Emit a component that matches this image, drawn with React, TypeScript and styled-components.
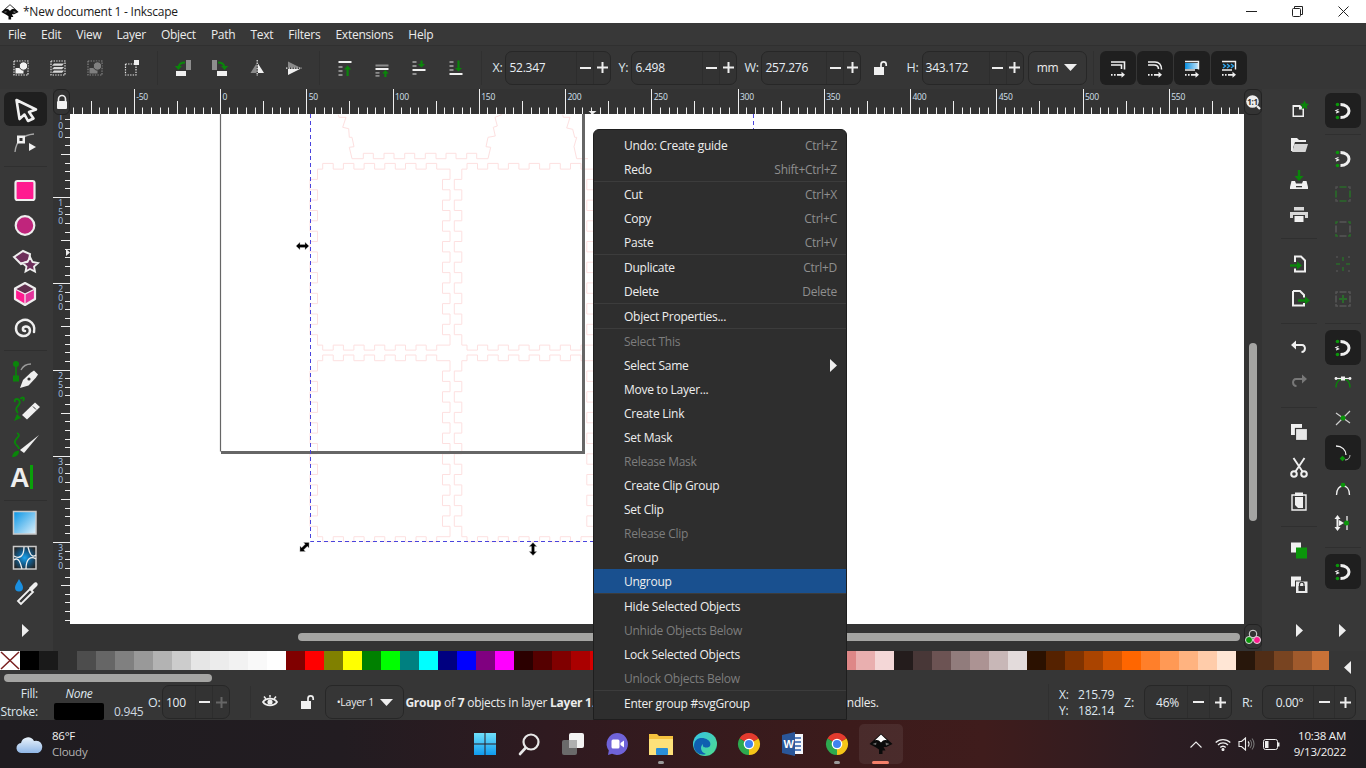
import React from "react";
import styled, { createGlobalStyle } from "styled-components";

const W = "#f0f0f0";
const G = "#0a850a";
const FONT = `"Open Sans", "Noto Sans", "Liberation Sans", sans-serif`;

const Global = createGlobalStyle`
  html, body { margin: 0; padding: 0; background: #363636; overflow: hidden; }
  * { box-sizing: border-box; }
`;

const Root = styled.div`
  position: relative; width: 1366px; height: 768px; overflow: hidden;
  display: flex; flex-direction: column; background: #363636; color: #ececec;
  font-family: ${FONT}; font-size: 12px; letter-spacing: -0.25px;
`;
const TitleBar = styled.div`
  height: 23px; background: #fff; color: #1a1a1a; display: flex; align-items: center; padding-left: 1px;
`;
const TitleText = styled.span` margin-left: 4px; font-size: 12px; flex: 1; `;
const WinBtn = styled.div` width: 46px; height: 23px; display: flex; align-items: center; justify-content: center; `;
const MenuBar = styled.div`
  height: 23px; background: #383838; display: flex; align-items: center; padding-left: 8px; gap: 15px;
  border-bottom: 1px solid #303030;
`;
const MenuLabel = styled.span` color: #ececec; `;
const ControlBar = styled.div`
  height: 43px; background: #363636; display: flex; align-items: center; padding-left: 2px; flex: none;
`;
const CmdSlot = styled.div`
  width: 37.2px; height: 34px; flex: none; display: flex; align-items: center; justify-content: center;
`;
const BarSep = styled.div`
  width: 13.4px; height: 34px; flex: none; display: flex; justify-content: center;
  &::after { content: ""; width: 1px; background: #303030; }
`;
const FieldLabel = styled.span<{ $w: number; $ml?: number }>`
  width: ${(p) => p.$w}px; margin-left: ${(p) => p.$ml ?? 0}px; flex: none; color: #dfe6ee; font-size: 12.5px;
`;
const Field = styled.div<{ $w: number; $ml?: number }>`
  width: ${(p) => p.$w}px; height: 34px; flex: none; margin-left: ${(p) => p.$ml ?? 0}px;
  display: flex; align-items: stretch; border: 1px solid #272727; border-radius: 7px; background: #333;
`;
const FieldValue = styled.div<{ $center?: boolean }>`
  flex: 1; min-width: 0; display: flex; align-items: center; padding-left: 3px; color: #e8eef4; font-size: 12px;
  justify-content: ${(p) => (p.$center ? "center" : "flex-start")};
`;
const Stepper = styled.div<{ $w: number }>`
  width: ${(p) => p.$w}px; flex: none; display: flex; align-items: center; justify-content: center;
  border-left: 1px solid #2d2d2d;
`;
const Dropdown = styled.div<{ $w: number; $ml?: number }>`
  width: ${(p) => p.$w}px; height: 34px; flex: none; margin-left: ${(p) => p.$ml ?? 0}px;
  display: flex; align-items: center; justify-content: center; gap: 6px;
  border: 1px solid #272727; border-radius: 7px; background: #363636; font-size: 12px;
`;
const LayerName = styled.span` font-size: 10.5px; `;
const DarkBtn = styled.div`
  width: 36px; height: 34px; margin-right: 1px; flex: none; background: #1f1f1f; border-radius: 6px;
  display: flex; align-items: center; justify-content: center;
`;
const Work = styled.div` height: 562px; flex: none; display: flex; `;
const Toolbox = styled.div`
  width: 53px; flex: none; display: flex; flex-direction: column; align-items: center; padding: 3px 3px 0 0;
  background: #383838;
`;
const ToolSlot = styled.div<{ $active?: boolean; $h?: number; $w?: number }>`
  width: ${(p) => p.$w ?? 43}px; height: ${(p) => p.$h ?? 34.4}px; flex: none; border-radius: 6px;
  display: flex; align-items: center; justify-content: center;
  background: ${(p) => (p.$active ? "#1f1f1f" : "transparent")};
`;
const ToolSep = styled.div<{ $h?: number; $w?: number }>`
  width: ${(p) => p.$w ?? 43}px; height: ${(p) => p.$h ?? 12}px; flex: none; display: flex; align-items: center;
  &::after { content: ""; flex: 1; height: 1px; background: #2f2f2f; }
`;
const BottomArrow = styled.div`
  margin-top: auto; margin-bottom: 11px; height: 20px; display: flex; align-items: center; justify-content: center;
`;
const CanvasCol = styled.div` flex: 1; min-width: 0; display: flex; flex-direction: column; background: #333; `;
const RulerRow = styled.div` height: 25px; flex: none; display: flex; `;
const CornerBtn = styled.div<{ $w: number }>`
  width: ${(p) => p.$w}px; height: 26px; flex: none; border: 1px solid #222; border-radius: 6px; z-index: 2;
  display: flex; align-items: center; justify-content: center; background: #333;
`;
const HRuler = styled.svg` flex: 1; height: 25px; display: block; min-width: 0; `;
const MidRow = styled.div` height: 510px; flex: none; display: flex; `;
const VRuler = styled.svg` width: 17px; height: 510px; flex: none; display: block; `;
const Drawing = styled.svg` flex: 1; height: 510px; min-width: 0; display: block; background: #fff; `;
const VTrack = styled.div` width: 18px; flex: none; padding: 229px 0 0 5px; background: #333; `;
const VThumb = styled.div` width: 8px; height: 178px; border-radius: 4px; background: #a5a5a3; `;
const HRow = styled.div` height: 27px; flex: none; display: flex; align-items: flex-start; padding-left: 245px; `;
const HThumb = styled.div` flex: 1; height: 8px; margin-top: 9px; border-radius: 4px; background: #a5a5a3; `;
const MixBtn = styled(CornerBtn)` margin-left: 4px; height: 25px; `;
const Commands = styled.div`
  width: 58px; flex: none; display: flex; flex-direction: column; align-items: center; padding: 4px 2px 0 18px;
  background: #383838;
`;
const Snaps = styled.div`
  width: 46px; flex: none; display: flex; flex-direction: column; align-items: center; padding: 4px 1px 0 0;
  background: #383838;
`;
const PaletteRow = styled.div` height: 33px; flex: none; display: flex; background: #363636; `;
const PaletteCol = styled.div` width: 1329px; flex: none; overflow: hidden; `;
const Swatches = styled.div` height: 19px; display: flex; `;
const Swatch = styled.div<{ $c: string }>` width: 19px; flex: none; background: ${(p) => p.$c}; `;
const NoPaint = styled.svg` width: 20px; height: 19px; flex: none; display: block; background: #fff; `;
const PaletteThumb = styled.div` width: 208px; height: 8px; margin: 4px 0 0 4px; border-radius: 4px; background: #a5a5a3; `;
const PaletteArrow = styled.div` flex: 1; display: flex; align-items: flex-start; justify-content: center; padding-top: 10px; `;
const Status = styled.div` height: 36px; flex: none; display: flex; align-items: center; background: #363636; padding-right: 10px; `;
const StyleGrid = styled.div`
  width: 148px; height: 36px; flex: none; display: grid; grid-template-columns: 38px 50px auto; column-gap: 16px;
  grid-template-rows: 19px 17px; align-items: center;
`;
const StyleLabel = styled.span` text-align: right; color: #dfe6ee; `;
const NoneText = styled.span` text-align: center; font-style: italic; color: #dfe6ee; `;
const StrokeBox = styled.div` height: 17px; background: #000; border-radius: 2px; `;
const StrokeValue = styled.span` margin-left: -6px; color: #cfd8e0; `;
const StatusSep = styled.div` width: 1px; height: 32px; margin-left: 20px; flex: none; background: #303030; `;
const Message = styled.div` flex: 1; min-width: 0; margin-left: 1px; white-space: nowrap; overflow: hidden; font-size: 12px; color: #ececec; `;
const Coords = styled.div`
  width: 76px; height: 36px; flex: none; padding: 2px 10px 0 10px; border-left: 1px solid #303030;
  display: grid; grid-template-columns: auto auto; justify-content: space-between; grid-auto-rows: 16px; align-items: center;
  color: #dfe6ee;
`;
const Taskbar = styled.div`
  height: 48px; flex: none; display: flex; align-items: center; position: relative;
  background: linear-gradient(90deg, #1f1c20 0%, #221c21 25%, #2f1a20 40%, #3c1b1b 62%, #3f1c1c 72%, #2c1c22 85%, #1f1c20 100%);
  color: #f2f2f2;
`;
const Weather = styled.div` width: 463px; flex: none; display: flex; align-items: center; padding-left: 16px; gap: 8px; `;
const WeatherText = styled.div` display: flex; flex-direction: column; line-height: 16px; font-size: 11.5px; `;
const Dim = styled.span` color: #b4b2b2; `;
const TaskIcon = styled.div<{ $active?: boolean }>`
  position: relative; width: 44px; height: 40px; flex: none; display: flex; align-items: center; justify-content: center;
  background: ${(p) => (p.$active ? "rgba(255,255,255,0.07)" : "transparent")}; border-radius: 5px;
`;
const TaskDot = styled.span`
  position: absolute; left: 19px; bottom: 0; width: 6px; height: 3px; border-radius: 2px; background: #9a9a9a;
`;
const TaskUnderline = styled.span`
  position: absolute; left: 13px; bottom: 0; width: 17px; height: 3px; border-radius: 2px; background: #f4806a;
`;
const Tray = styled.div` margin-left: auto; display: flex; align-items: center; padding-right: 20px; `;
const TraySlot = styled.div<{ $w: number }>` width: ${(p) => p.$w}px; height: 24px; display: flex; align-items: center; justify-content: center; `;
const Clock = styled.div` margin-left: 7px; text-align: right; line-height: 16px; font-size: 11.5px; `;
const Menu = styled.div`
  position: absolute; left: 593px; top: 129px; width: 254px; height: 591px; padding-top: 3px;
  background: #2e2e2e; border: 1px solid #1e1e1e; border-radius: 6px 6px 0 0; color: #eee; overflow: hidden;
`;
const MenuRow = styled.div<{ $off?: boolean; $on?: boolean }>`
  height: 24px; display: flex; align-items: center; justify-content: space-between; padding: 0 9px 0 30px;
  color: ${(p) => (p.$off ? "#7d7d7d" : "#eee")};
  background: ${(p) => (p.$on ? "#19508f" : "transparent")};
`;
const Shortcut = styled.span` color: #8f8f8f; `;
const MenuSep = styled.div` height: 1px; background: #3c3c3c; `;

type Sv = { s?: number; children: React.ReactNode; vb?: string };
const Ic = ({ s = 24, vb = "0 0 24 24", children }: Sv) => (
  <svg width={s} height={s} viewBox={vb} style={{ overflow: "visible", display: "block" }}>{children}</svg>
);
const dash = { fill: "none", stroke: "#e8e8e8", strokeWidth: 1.2, strokeDasharray: "1.4 1.2" };

const Minus = ({ c = "#eee" }: { c?: string }) => <svg width="11" height="2"><rect width="11" height="2" fill={c} /></svg>;
const Plus = ({ c = "#eee" }: { c?: string }) => (
  <svg width="11" height="11"><rect y="4.5" width="11" height="2" fill={c} /><rect x="4.5" width="2" height="11" fill={c} /></svg>
);
const Tri = ({ d, c = "#eee" }: { d: "down" | "right" | "left"; c?: string }) =>
  d === "down" ? <svg width="13" height="7"><polygon points="0,0 13,0 6.5,7" fill={c} /></svg>
    : d === "right" ? <svg width="7" height="13"><polygon points="0,0 7,6.5 0,13" fill={c} /></svg>
      : <svg width="7" height="13"><polygon points="7,0 0,6.5 7,13" fill={c} /></svg>;

const Unlock = () => (
  <Ic s={16} vb="0 0 16 16"><path d="M9 7V4.5a2.6 2.6 0 0 1 5.2 0V6" fill="none" stroke={W} strokeWidth="1.7" /><rect x="2" y="7" width="10" height="8" fill={W} /></Ic>
);
const Lock = () => (
  <Ic s={16} vb="0 0 16 16"><path d="M4.5 7V5a3.5 3.5 0 0 1 7 0v2" fill="none" stroke={W} strokeWidth="1.6" /><rect x="3" y="7" width="10" height="8" rx="1" fill={W} /></Ic>
);

const InkLogo = ({ s = 18 }: { s?: number }) => (
  <Ic s={s}>
    <path d="M12 1.500 23.500 12 17.500 15 14.500 15 16.500 18.500 13.500 18.500 13.500 22 10 22 10 17.500 7 15.500 .5 12Z" fill="#0a0a0a" />
    <path d="M12 2.500 18 8.300C15.500 7.500 14 8 12 10.500 10 8 8.500 7.500 6 8.300Z" fill="#fff" />
    <path d="M3.500 12 7.500 10.500 7 13ZM20.500 12 16.500 10.500 17 13.500Z" fill="#6e6e6e" />
  </Ic>
);

const SelAll = ({ c = "#f2f2f2", d = "#e8e8e8" }: { c?: string; d?: string }) => (
  <Ic>
    <rect x="5" y="5" width="14" height="14" {...dash} stroke={d} />
    <rect x="6.5" y="12" width="8" height="5.5" fill={c} />
    <circle cx="14.5" cy="10" r="4.2" fill={c} stroke="#363636" strokeWidth="1" />
  </Ic>
);
const cmdIcons: React.ReactNode[] = [
  <SelAll key="a" />,
  <Ic key="b"><rect x="5" y="5" width="14" height="14" {...dash} /><path d="M8 7.5h10l-2 2.2H6ZM8 11h10l-2 2.2H6ZM8 14.5h10l-2 2.2H6Z" fill="#d8d8d8" /></Ic>,
  <SelAll key="c" c="#7f7f7f" d="#858585" />,
  <Ic key="d"><rect x="5.5" y="8" width="10.5" height="11" {...dash} /><rect x="14" y="4" width="5" height="5" fill={W} /></Ic>,
  <Ic key="e"><rect x="15" y="4" width="5" height="10" fill="#8d8d8d" /><rect x="5" y="15" width="10" height="5" fill={W} /><path d="M14 6.5C10 6.5 8 8.5 7.6 11" fill="none" stroke={G} strokeWidth="2" /><polygon points="3.8,10 11,10 7.4,14" fill={G} /></Ic>,
  <Ic key="f"><rect x="4" y="4" width="5" height="10" fill="#8d8d8d" /><rect x="9" y="15" width="10" height="5" fill={W} /><path d="M10 6.5C14 6.5 16 8.5 16.4 11" fill="none" stroke={G} strokeWidth="2" /><polygon points="13,10 20.2,10 16.6,14" fill={G} /></Ic>,
  <Ic key="g"><polygon points="5.5,17 11.5,7.5 11.5,17" fill="#8a8a8a" /><polygon points="13,7.5 19,17 13,17" fill={W} /><line x1="12.2" y1="4" x2="12.2" y2="20" {...dash} /></Ic>,
  <Ic key="h"><polygon points="6,5.5 18,11.5 6,11.5" fill="#8a8a8a" /><polygon points="6,13 18,13 6,19" fill={W} /><line x1="4" y1="12.2" x2="20" y2="12.2" {...dash} /></Ic>,
  <Ic key="i"><rect x="5.5" y="5" width="13" height="2" fill={W} /><path d="M5.5 10h4v2h-4zM5.5 14h4v2h-4zM5.5 18h4v2h-4z" fill="#8d8d8d" /><path d="M14.6 20v-7" stroke={G} strokeWidth="2.2" /><polygon points="11,13.5 18.2,13.5 14.6,9.5" fill={G} /></Ic>,
  <Ic key="j"><rect x="5.5" y="8.5" width="13" height="2" fill="#8d8d8d" /><rect x="5.5" y="12" width="13" height="2" fill={W} /><path d="M5.5 16h4v1.8h-4zM5.5 19h4v1.8h-4z" fill="#8d8d8d" /><path d="M15.4 21v-4" stroke={G} strokeWidth="2.2" /><polygon points="12,17.5 18.8,17.5 15.4,14" fill={G} /></Ic>,
  <Ic key="k"><path d="M5.5 5h4v2h-4zM5.5 9h4v2h-4zM5.5 17h4v2h-4z" fill="#8d8d8d" /><rect x="5.5" y="13" width="13" height="2" fill={W} /><path d="M14.5 4.5v4" stroke={G} strokeWidth="2.2" /><polygon points="11,8 18,8 14.5,11.5" fill={G} /></Ic>,
  <Ic key="l"><path d="M5.5 5h4v2h-4zM5.5 9h4v2h-4zM5.5 13h4v2h-4z" fill="#8d8d8d" /><rect x="5.5" y="17" width="13" height="2" fill={W} /><path d="M14.5 4.5v8" stroke={G} strokeWidth="2.2" /><polygon points="11,12 18,12 14.5,15.5" fill={G} /></Ic>,
];

const TB = ({ top, fill }: { top: React.ReactNode; fill?: React.ReactNode }) => (
  <Ic>
    {fill}
    {top}
    <path d="M5 18.8h1.6M8 18.8h1.6M11 18.8h6" stroke={W} strokeWidth="1.7" fill="none" />
    <polygon points="15.5,15.8 19,18.8 15.5,21.8" fill={W} />
  </Ic>
);
const tfIcons = [
  <TB key="a" top={<path d="M5 6h13.5v7.5M5 9h10.5v4" fill="none" stroke={W} strokeWidth="1.6" />} />,
  <TB key="b" top={<path d="M5 6h7c4 0 6.5 3 6.5 7.5M5 9h6c3 0 4.5 2 4.5 4" fill="none" stroke={W} strokeWidth="1.6" />} />,
  <TB key="c"
    fill={<><defs><linearGradient id="tfg" x1="0" x2="1"><stop offset="0" stopColor="#0a8fe0" /><stop offset="1" stopColor="#bfe3fa" /></linearGradient></defs><rect x="5" y="7" width="13" height="6" fill="url(#tfg)" /></>}
    top={<path d="M5 5.5h13.5v8M5 14h10" fill="none" stroke={W} strokeWidth="1.4" />} />,
  <TB key="d"
    fill={<path d="M6 8l2.5 2L6 12M10 8l2.5 2L10 12M14 8l2.5 2L14 12" fill="none" stroke="#2ea6ee" strokeWidth="1.4" />}
    top={<path d="M5 5.5h13.5v8M5 14h10" fill="none" stroke={W} strokeWidth="1.4" />} />,
];

const toolIcons: Record<string, React.ReactNode> = {
  arrow: <Ic s={32} vb="0 0 32 32"><path d="M7.5 7 27 16.5 20 19 24.5 25.5 19 28 15.5 21.5 10.5 26Z" fill="#262626" stroke={W} strokeWidth="2.6" strokeLinejoin="round" /></Ic>,
  node: <Ic s={32} vb="0 0 32 32"><path d="M6 24C7 13 14 7 25 6" fill="none" stroke="#a8a8a8" strokeWidth="1.3" /><rect x="8" y="7.5" width="8" height="8" fill={W} /><rect x="10.5" y="10" width="3" height="3" fill="#333" /><polygon points="20,15 27,19 20,23" fill={W} /></Ic>,
  rect: <Ic s={32} vb="0 0 32 32"><rect x="6.5" y="7" width="19" height="19" rx="2" fill="#ff1a90" stroke="#eee" strokeWidth="2.2" /></Ic>,
  circle: <Ic s={32} vb="0 0 32 32"><circle cx="16" cy="17.5" r="9.3" fill="#c0257c" stroke="#eee" strokeWidth="2.2" /></Ic>,
  star: <Ic s={32} vb="0 0 32 32"><polygon points="5,14 14,8 21,11 20,18 12,21" fill="#6e2f5b" stroke="#eee" strokeWidth="2" /><polygon points="21,14 23.5,19 29,20 25,23.5 26,28.5 21,26 16.5,28.5 17.500,23.5 13.5,20 18.5,19" fill="#6e2f5b" stroke="#eee" strokeWidth="1.8" /></Ic>,
  box: <Ic s={32} vb="0 0 32 32"><polygon points="16,6 26,12 16,17 6,12" fill="#62304f" /><polygon points="6,12 16,17 16,27 6,22" fill="#ff1a90" /><polygon points="26,12 16,17 16,27 26,22" fill="#e3349c" /><path d="M6 12 16 17 26 12M16 17V27" fill="none" stroke="#eee" strokeWidth="1.200" /><polygon points="16,6 26,11.5 26,22 16,28 6,22 6,11.5" fill="none" stroke="#eee" strokeWidth="2.2" strokeLinejoin="round" /></Ic>,
  spiral: <Ic s={32} vb="0 0 32 32"><path d="M16 19c-2.6 0-3.2-4 .5-4.5 4.5-.5 6 5 2.5 8-4.500 3.500-12 .5-12-6 0-7 8-10.500 13.500-7.500 3.500 2 5.500 6 4.500 11" fill="none" stroke="#eee" strokeWidth="2.5" strokeLinecap="round" /></Ic>,
  pen: <Ic s={32} vb="0 0 32 32"><line x1="7" y1="6" x2="7" y2="20" stroke={G} strokeWidth="1.6" /><circle cx="7" cy="6" r="3" fill={G} /><rect x="4" y="17.500" width="6" height="6" fill={G} /><path d="M12 12C14 8 18 6 22 6" fill="none" stroke="#9a9a9a" strokeWidth="1.3" /><path d="M11 30 14 22 22 14.500 25 12.500 29 16.500 27 19.500 19.500 27.500Z" fill={W} /><circle cx="20" cy="21" r="1.600" fill="#363636" /></Ic>,
  pencil: <Ic s={32} vb="0 0 32 32"><path d="M9 21C3 15 14 13 10 8 8 6 5 7 6 10M11.500 7C14 4 16 6 14 9" fill="none" stroke={G} strokeWidth="1.900" /><polygon points="5,29 8,22 12,26" fill={G} /><polygon points="13,23 26,10.500 31,15 18,27.500" fill={W} /><line x1="24" y1="14.500" x2="27" y2="17.500" stroke="#363636" strokeWidth="1" /></Ic>,
  brush: <Ic s={32} vb="0 0 32 32"><path d="M8 6C14 9 4 12 6 16 7 19 10 19 10 22" fill="none" stroke={G} strokeWidth="1.900" /><path d="M3 30C4 25 7 23 10 24 10 28 7 30 3 30Z" fill={G} /><path d="M11 23 30 8 15 26Z" fill={W} /></Ic>,
  text: <Ic s={32} vb="0 0 32 32"><text x="1" y="26" fontFamily="Liberation Sans, sans-serif" fontWeight="700" fontSize="27" fill="#eee">A</text><rect x="21" y="4" width="3" height="24" fill="#0aa00a" /></Ic>,
  grad: <Ic s={32} vb="0 0 32 32"><defs><linearGradient id="gd" x1="0" y1="0" x2="1" y2="1"><stop offset="0" stopColor="#0795e6" /><stop offset="1" stopColor="#e2f2fb" /></linearGradient></defs><rect x="4.500" y="4.500" width="22.500" height="22.500" fill="url(#gd)" stroke="#c9c9c9" strokeWidth="1.500" /></Ic>,
  mesh: <Ic s={32} vb="0 0 32 32"><defs><radialGradient id="ms" r="0.6"><stop offset="0" stopColor="#1ba4f0" /><stop offset="0.5" stopColor="#125a8a" /><stop offset="1" stopColor="#242424" /></radialGradient></defs><rect x="4.500" y="4.500" width="22.500" height="22.500" fill="url(#ms)" stroke="#c9c9c9" strokeWidth="1.500" /><path d="M5 14C10 17 15 15 15 5M27 17C22 14 17 16 17 27M5 18C10 14 12 23 13 27M27 13C22 17 20 9 19 5" fill="none" stroke="#eee" strokeWidth="1.300" /></Ic>,
  drop: <Ic s={32} vb="0 0 32 32"><path d="M10 3C12 7 14 9 14 11.500A4 4 0 0 1 6 11.500C6 9 8 7 10 3Z" fill="#1a8fe0" /><path d="M11 27 9 25 21 13 24 16 12 28Z" fill="#363636" stroke={W} strokeWidth="1.800" /><path d="M20 12 25 7C27 5 30 8 28 10L23 15Z" fill={W} /></Ic>,
};

const cmdCol: Record<string, React.ReactNode> = {
  new: <Ic><path d="M5.500 7h7.500l4 4v8H5.500Z" fill={W} /><path d="M7 9v8.500h8.500V11.500H12V9Z" fill="#363636" /><polygon points="17.500,2.500 18.900,5.600 22,6 19.700,8.100 20.400,11.300 17.500,9.600 14.600,11.300 15.300,8.100 13,6 16.100,5.600" fill={G} /></Ic>,
  open: <Ic><path d="M4 5h6l2 2h7v2H8l-2 6v3H4Z" fill={W} /><path d="M7.500 11H21l-2.500 8H5Z" fill="#d6d6d6" /></Ic>,
  save: <Ic><path d="M3 20l1.500-6H8l1 2.500h6l1-2.500h3.500L21 20v2H3Z" fill={W} /><rect x="9" y="19" width="6" height="1.300" fill="#363636" /><path d="M12 3v8" stroke={G} strokeWidth="2.400" /><polygon points="7.500,9 16.500,9 12,14" fill={G} /></Ic>,
  print: <Ic><rect x="7" y="5" width="10" height="3.500" fill="#d8d8d8" /><path d="M3 10h18v6h-3v-3H6v3H3Z" fill="#d8d8d8" /><rect x="7.500" y="14" width="9" height="6" fill={W} /></Ic>,
  imp: <Ic><path d="M8 10V4.500h6l4 4v11H8v-3" fill="none" stroke={W} strokeWidth="2" /><path d="M3 13.500h8" stroke={G} strokeWidth="2.400" /><polygon points="10,9.500 15,13.500 10,17.500" fill={G} /></Ic>,
  exp: <Ic><path d="M6 5h7l4 4v2.500M17 17v2.500H6V5" fill="none" stroke={W} strokeWidth="2" /><path d="M11 14.500h9" stroke={G} strokeWidth="2.400" /><polygon points="18,10.500 23,14.500 18,18.500" fill={G} /></Ic>,
  undo: <Ic><path d="M8 9h7c4 0 4 7-.5 7" fill="none" stroke={W} strokeWidth="2" /><polygon points="9,4.500 9,13.500 4,9" fill={W} /></Ic>,
  redo: <Ic><path d="M16 9H9c-4 0-4 7 .5 7" fill="none" stroke="#787878" strokeWidth="2" /><polygon points="15,4.500 15,13.500 20,9" fill="#787878" /></Ic>,
  copy: <Ic><rect x="4" y="4" width="11" height="11" fill={W} /><rect x="8.500" y="8.500" width="12" height="12" fill="#e8e8e8" stroke="#363636" strokeWidth="1.200" /></Ic>,
  cut: <Ic><circle cx="7" cy="19" r="2.800" fill="none" stroke={W} strokeWidth="2" /><circle cx="17" cy="19" r="2.800" fill="none" stroke={W} strokeWidth="2" /><path d="M8.500 16.500 17.500 3M15.500 16.500 6.500 3" stroke={W} strokeWidth="1.900" /></Ic>,
  paste: <Ic><path d="M8 6H5v15h14V6h-3" fill="none" stroke={W} strokeWidth="1.400" /><rect x="8" y="3.500" width="8" height="3.500" fill={W} /><path d="M8 8h8v11h-5l-3-3Z" fill={W} /></Ic>,
  clone: <Ic><rect x="4" y="3.500" width="10" height="10" fill={W} /><rect x="9" y="8.500" width="11" height="11" fill="#0a960a" /></Ic>,
  lockc: <Ic><rect x="4" y="3.500" width="10" height="10" fill={W} /><rect x="8.500" y="8" width="12.500" height="12.500" fill="#eaeaea" stroke="#363636" strokeWidth="1" /><path d="M12.500 13v-1.500a2.200 2.200 0 0 1 4.500 0V13" fill="none" stroke="#333" strokeWidth="1.200" /><rect x="11.500" y="13" width="6.500" height="5" fill="#333" /></Ic>,
};
const Magnet = () => (
  <Ic>
    <path d="M9.500 5.500c5 0 8.500 3 8.500 6.500s-3.500 6.500-8.500 6.500" fill="none" stroke={W} strokeWidth="3" />
    <circle cx="6.500" cy="5.500" r="1.800" fill="#0a960a" /><circle cx="6.500" cy="18.500" r="1.800" fill="#0a960a" />
    <path d="M7.500 10.500 5 11.500 7.500 13 5 14" fill="none" stroke={W} strokeWidth="1.200" />
  </Ic>
);
const dimG = "#2a6a2a";
const mids = "M8.500 5h7M8.500 19h7M5 8.500v7M19 8.500v7";
const corners = "M4.500 5H7M17 5h2.500M4.500 19H7M17 19h2.500M5 4.500V7M19 4.500V7M5 17v2.500M19 17v2.500";
const snapIcons: Record<string, React.ReactNode> = {
  a: <Ic><path d={mids} stroke={dimG} strokeWidth="1.700" /><path d={corners} stroke="#505050" strokeWidth="1.500" /></Ic>,
  b: <Ic><path d={mids} stroke="#555" strokeWidth="1.700" /><path d={corners} stroke={dimG} strokeWidth="1.700" /></Ic>,
  c: <Ic><path d="M5 12h4M15 12h4M12 5v4M12 15v4" stroke={dimG} strokeWidth="1.600" /><path d="M5 5h2M17 5h2M5 19h2M17 19h2" stroke="#505050" strokeWidth="1.500" /></Ic>,
  d: <Ic><path d={mids} stroke="#555" strokeWidth="1.600" /><path d={corners} stroke="#555" strokeWidth="1.500" /><path d="M8 12h8M12 8v8" stroke={dimG} strokeWidth="2" /></Ic>,
  e: <Ic><path d="M5 16.500C5 11 8 8 12 8s7 3 7 8.500" fill="none" stroke={G} strokeWidth="1.400" /><path d="M4 7.500h16" stroke={W} strokeWidth="1.200" /><rect x="10" y="5.500" width="4" height="4" fill={W} /><circle cx="5" cy="7.500" r="1.400" fill={W} /><circle cx="19" cy="7.500" r="1.400" fill={W} /></Ic>,
  f: <Ic><path d="M5 19 19 5M5 7l14 10" stroke="#cfcfcf" strokeWidth="1.200" /><circle cx="12" cy="12" r="2.500" fill="#0a960a" /></Ic>,
  g: <Ic><path d="M5 5c6 0 10 4 10 9" fill="none" stroke={W} strokeWidth="1.300" /><path d="M19 14c0 3-2 5-5 5" fill="none" stroke="#bbb" strokeWidth="1" /><rect x="9.500" y="15.500" width="4" height="4" transform="rotate(45 11.500 17.500)" fill="#0a960a" /></Ic>,
  h: <Ic><path d="M5.500 19c0-6 3-9 6.500-9s6.500 3 6.500 9" fill="none" stroke={W} strokeWidth="1.300" /><circle cx="12" cy="9" r="2.300" fill="#0a960a" /></Ic>,
  i: <Ic><path d="M16 5v14" stroke={W} strokeWidth="1.300" /><path d="M6.500 7v10" stroke={W} strokeWidth="2" /><polygon points="3.500,8 9.500,8 6.500,4" fill={W} /><polygon points="3.500,16 9.500,16 6.500,20" fill={W} /><polygon points="8,9 13,12 8,15" fill={W} /><circle cx="15.500" cy="12" r="2.500" fill="#0a960a" /></Ic>,
};

const MixIcon = () => (
  <Ic s={20} vb="0 0 20 20">
    <circle cx="10" cy="7" r="3.800" fill="none" stroke="#ddd" strokeWidth="1" />
    <circle cx="6" cy="13" r="3.500" fill="#0a960a" stroke="#ddd" strokeWidth="1" />
    <circle cx="14" cy="13" r="3.500" fill="#ff1a90" stroke="#ddd" strokeWidth="1" />
  </Ic>
);

const palette = "000000 1a1a1a 333333 4d4d4d 666666 808080 999999 b3b3b3 cccccc e6e6e6 ececec f2f2f2 f9f9f9 ffffff 800000 ff0000 808000 ffff00 008000 00ff00 008080 00ffff 000080 0000ff 800080 ff00ff 2b0000 550000 800000 aa0000 d40000 ff0000 ff2a2a ff5555 ff8080 ffaaaa ffd5d5 280b0b 501616 782121 a02c2c c83737 d35f5f de8787 e9afaf f4d7d7 241c1c 483737 6c5353 917c7c ac9393 c8b7b7 e3dbdb 2b1100 552200 803300 aa4400 d45500 ff6600 ff7f2a ff9955 ffb380 ffccaa ffe6d5 28170b 502d16 784421 a05a2c c87137".split(" ");

const S = 1.725;
const hTicks: number[] = [];
for (let v = -85; v <= 590; v += 5) hTicks.push(v);
const vTicks: number[] = [];
for (let v = 5; v <= 400; v += 5) vTicks.push(v);
const vY = (v: number) => 197 + (v - 150) * S;

const panel = (x: number, y: number) => {
  const kx = [0, 1, 2, 3, 4, 5], ky = [0, 1, 2, 3, 4, 5, 6, 7];
  const tx = (k: number) => x + 12.7 + 20.7 * k;
  const ty = (k: number) => y + 16 + 20.7 * k;
  let d = `M${x + 7.5} ${y + 5.7}`;
  kx.forEach((k) => { d += `L${tx(k)} ${y + 5.7}L${tx(k)} ${y}L${tx(k) + 10.5} ${y}L${tx(k) + 10.5} ${y + 5.7}`; });
  d += `L${x + 140} ${y + 5.7}`;
  ky.forEach((k) => { d += `L${x + 140} ${ty(k)}L${x + 132.5} ${ty(k)}L${x + 132.5} ${ty(k) + 10.4}L${x + 140} ${ty(k) + 10.4}`; });
  d += `L${x + 140} ${y + 181.7}`;
  [...kx].reverse().forEach((k) => { d += `L${tx(k) + 10.5} ${y + 181.7}L${tx(k) + 10.5} ${y + 186.7}L${tx(k)} ${y + 186.7}L${tx(k)} ${y + 181.7}`; });
  d += `L${x + 7.5} ${y + 181.7}`;
  [...ky].reverse().forEach((k) => { d += `L${x + 7.5} ${ty(k) + 10.4}L${x} ${ty(k) + 10.4}L${x} ${ty(k)}L${x + 7.5} ${ty(k)}`; });
  return d + "Z";
};
const zp = (pts: number[][]) => pts.map((p) => `${(210 + p[0] / 3).toFixed(1)},${(100 + p[1] / 3).toFixed(1)}`).join(" ");
const trap = zp([[385, 44], [387, 52], [408, 52], [398, 82], [416, 86], [418, 112], [426, 112], [432, 140], [418, 142], [426, 176], [460, 176], [460, 160], [490, 160], [490, 176], [522, 176], [522, 160], [552, 160], [552, 176], [584, 176], [584, 160], [614, 160], [614, 176], [646, 176], [646, 160], [678, 160], [678, 176], [708, 176], [708, 160], [738, 160], [738, 176], [770, 176], [770, 160], [800, 160], [800, 176], [834, 176], [842, 142], [828, 140], [834, 112], [856, 108], [850, 82], [862, 78], [855, 52], [875, 44]]);
const trap2 = zp([[1058, 44], [1060, 52], [1080, 52], [1070, 84], [1088, 88], [1094, 112], [1100, 112], [1092, 140], [1100, 176], [1134, 176]]);

const Handle = ({ x, y, r }: { x: number; y: number; r: number }) => (
  <g transform={`translate(${x} ${y}) rotate(${r})`}>
    <polygon points="-6.500,0 -2.500,-3.800 -2.500,-1.500 2.500,-1.500 2.500,-3.800 6.500,0 2.500,3.800 2.500,1.500 -2.500,1.500 -2.500,3.800" fill="#000" stroke="#bbb" strokeWidth="0.400" />
  </g>
);

const ChromeIc = () => (
  <Ic>
    <path d="M12 12 2.470 6.500A11 11 0 0 1 21.530 6.500Z" fill="#e33b2e" />
    <path d="M12 12 21.530 6.500A11 11 0 0 1 12 23Z" fill="#f5c518" />
    <path d="M12 12 12 23A11 11 0 0 1 2.470 6.500Z" fill="#2da94f" />
    <circle cx="12" cy="12" r="5.300" fill="#fff" /><circle cx="12" cy="12" r="4" fill="#3f82ef" />
  </Ic>
);

type Row = { t: string; k?: string; off?: boolean; on?: boolean; sep?: boolean; more?: boolean };
const menu: Row[] = [
  { t: "Undo: Create guide", k: "Ctrl+Z" }, { t: "Redo", k: "Shift+Ctrl+Z", sep: true },
  { t: "Cut", k: "Ctrl+X" }, { t: "Copy", k: "Ctrl+C" }, { t: "Paste", k: "Ctrl+V", sep: true },
  { t: "Duplicate", k: "Ctrl+D" }, { t: "Delete", k: "Delete", sep: true },
  { t: "Object Properties...", sep: true },
  { t: "Select This", off: true }, { t: "Select Same", more: true }, { t: "Move to Layer..." }, { t: "Create Link" },
  { t: "Set Mask" }, { t: "Release Mask", off: true }, { t: "Create Clip Group" }, { t: "Set Clip" },
  { t: "Release Clip", off: true }, { t: "Group" }, { t: "Ungroup", on: true, sep: true },
  { t: "Hide Selected Objects" }, { t: "Unhide Objects Below", off: true }, { t: "Lock Selected Objects" },
  { t: "Unlock Objects Below", off: true, sep: true }, { t: "Enter group #svgGroup" },
];

const NumField = ({ w, v, ml }: { w: number; v: string; ml?: number }) => (
  <Field $w={w} $ml={ml}>
    <FieldValue>{v}</FieldValue>
    <Stepper $w={17}><Minus /></Stepper>
    <Stepper $w={17}><Plus /></Stepper>
  </Field>
);

const slotGroup = (list: (string | number)[], icons: Record<string, React.ReactNode>, h: number, w: number, actives: string[] = []) =>
  list.map((it, i) =>
    typeof it === "number"
      ? <ToolSep key={i} $h={it} $w={w} />
      : <ToolSlot key={i} $h={h} $w={w} $active={actives.includes(`${it}${i}`)}>{icons[it]}</ToolSlot>
  );

export default function App() {
  return (
    <Root>
      <Global />
      <TitleBar>
        <InkLogo s={18} />
        <TitleText>*New document 1 - Inkscape</TitleText>
        <WinBtn><svg width="11" height="2"><rect width="11" height="1" fill="#222" /></svg></WinBtn>
        <WinBtn><svg width="11" height="11" fill="none" stroke="#222"><rect x="0.500" y="2.500" width="8" height="8" rx="1" /><path d="M2.500 2.500V.5h8v8H8.500" /></svg></WinBtn>
        <WinBtn><svg width="11" height="11" stroke="#222"><path d="M.5.5l10 10M10.500.5l-10 10" /></svg></WinBtn>
      </TitleBar>
      <MenuBar>
        {["File", "Edit", "View", "Layer", "Object", "Path", "Text", "Filters", "Extensions", "Help"].map((m) => <MenuLabel key={m}>{m}</MenuLabel>)}
      </MenuBar>
      <ControlBar>
        {cmdIcons.map((ic, i) => (
          <React.Fragment key={i}>
            {i > 0 && i % 4 === 0 && <BarSep />}
            <CmdSlot>{ic}</CmdSlot>
          </React.Fragment>
        ))}
        <BarSep />
        <FieldLabel $w={13} $ml={4}>X:</FieldLabel>
        <NumField w={106} v="52.347" />
        <FieldLabel $w={13} $ml={7}>Y:</FieldLabel>
        <NumField w={106} v="6.498" />
        <FieldLabel $w={17} $ml={7}>W:</FieldLabel>
        <NumField w={100} v="257.276" />
        <CmdSlot><Unlock /></CmdSlot>
        <FieldLabel $w={15} $ml={8}>H:</FieldLabel>
        <NumField w={102} v="343.172" />
        <Dropdown $w={59} $ml={4}>mm <Tri d="down" /></Dropdown>
        <BarSep />
        {tfIcons.map((ic, i) => <DarkBtn key={i}>{ic}</DarkBtn>)}
      </ControlBar>
      <Work>
        <Toolbox>
          {slotGroup(["arrow", "node", 12, "rect", "circle", "star", "box", "spiral", 12, "pen", "pencil", "brush", "text", 12, "grad", "mesh", "drop"], toolIcons, 34.4, 43, ["arrow0"])}
          <BottomArrow><Tri d="right" /></BottomArrow>
        </Toolbox>
        <CanvasCol>
          <RulerRow>
            <CornerBtn $w={17}><Lock /></CornerBtn>
            <HRuler viewBox="70 89 1174 25">
              {hTicks.map((v) => {
                const x = Math.round(220 + v * S) + 0.5;
                const y = v % 50 === 0 ? 89 : v % 25 === 0 ? 101 : 107.5;
                return <line key={v} x1={x} x2={x} y1={y} y2={114} stroke="#eee" strokeWidth="1" />;
              })}
              {hTicks.filter((v) => v % 50 === 0).map((v) => (
                <text key={v} x={220 + v * S + 2.5} y={99.500} fontSize="8.500" fontFamily="Open Sans, sans-serif" fill="#d4e0ee">{v}</text>
              ))}
              <polygon points="588.500,111 596.500,111 592.500,114.500" fill="#eee" />
            </HRuler>
            <CornerBtn $w={18}>
              <Ic s={16} vb="0 0 16 16">
                <circle cx="7.500" cy="7.500" r="6.300" fill="#eee" /><line x1="12" y1="12" x2="15" y2="15" stroke="#eee" strokeWidth="2.200" />
                <text x="7.500" y="10.500" textAnchor="middle" fontSize="8" fontWeight="700" fontFamily="Open Sans, sans-serif" fill="#333">1:1</text>
              </Ic>
            </CornerBtn>
          </RulerRow>
          <MidRow>
            <VRuler viewBox="53 114 17 510">
              {vTicks.map((v) => {
                const y = Math.round(vY(v)) + 0.5;
                const x = v % 50 === 0 ? 53 : v % 25 === 0 ? 61 : 65;
                return <line key={v} x1={x} x2={70} y1={y} y2={y} stroke="#eee" strokeWidth="1" />;
              })}
              {[100, 150, 200, 250, 300, 350].map((v) =>
                String(v).split("").map((c, i) => (
                  <text key={`${v}-${i}`} x={60.500} y={vY(v) + 9 + i * 9} textAnchor="middle" fontSize="8.500" fontFamily="Open Sans, sans-serif" fill="#a7c6ea">{c}</text>
                ))
              )}
              <polygon points="66,249 70,252.500 66,256" fill="#eee" />
            </VRuler>
            <Drawing viewBox="70 114 1174 510">
              <g fill="none" stroke="#fde0e0" strokeWidth="1">
                <path d={panel(310, 163.400)} /><path d={panel(454.300, 163.400)} />
                <path d={panel(310, 355)} /><path d={panel(454.300, 355)} />
                <polyline points={trap} /><polyline points={trap2} />
              </g>
              <path d="M220.500 114V451.500" stroke="#666" strokeWidth="1.200" fill="none" />
              <rect x="221" y="451" width="364" height="3" fill="#666" />
              <rect x="582" y="114" width="3" height="340" fill="#666" />
              <g fill="none" stroke="#4a44dd" strokeWidth="1" strokeDasharray="4 3">
                <path d="M310.500 114V541.500H600" /><path d="M753.500 114V135" />
              </g>
              <Handle x={302.500} y={246} r={0} />
              <Handle x={533} y={549} r={90} />
              <Handle x={304.500} y={547} r={-45} />
            </Drawing>
            <VTrack><VThumb /></VTrack>
          </MidRow>
          <HRow>
            <HThumb />
            <MixBtn $w={18}><MixIcon /></MixBtn>
          </HRow>
        </CanvasCol>
        <Commands>
          {slotGroup(["new", "open", "save", "print", 15, "imp", "exp", 15, "undo", "redo", 15, "copy", "cut", "paste", 15, "clone", "lockc"], cmdCol, 34.6, 36)}
          <BottomArrow><Tri d="right" /></BottomArrow>
        </Commands>
        <Snaps>
          {[
            ["m", true], 13, ["m", false], ["a", false], ["b", false], ["c", false], ["d", false], 14,
            ["m", true], ["e", false], ["f", false], ["g", true], ["h", false], ["i", false], 14, ["m", true],
          ].map((it, i) =>
            typeof it === "number"
              ? <ToolSep key={i} $h={it} $w={36} />
              : <ToolSlot key={i} $h={35} $w={36} $active={it[1] as boolean}>{it[0] === "m" ? <Magnet /> : snapIcons[it[0] as string]}</ToolSlot>
          )}
          <BottomArrow><Tri d="right" /></BottomArrow>
        </Snaps>
      </Work>
      <PaletteRow>
        <PaletteCol>
          <Swatches>
            <NoPaint viewBox="0 0 20 19"><path d="M1 1 19 18M19 1 1 18" stroke="#7a1f1f" strokeWidth="1.500" /></NoPaint>
            {palette.map((c, i) => <Swatch key={i} $c={`#${c}`} />)}
          </Swatches>
          <PaletteThumb />
        </PaletteCol>
        <PaletteArrow><Tri d="left" /></PaletteArrow>
      </PaletteRow>
      <Status>
        <StyleGrid>
          <StyleLabel>Fill:</StyleLabel><NoneText>None</NoneText><span />
          <StyleLabel>Stroke:</StyleLabel><StrokeBox /><StrokeValue>0.945</StrokeValue>
        </StyleGrid>
        <FieldLabel $w={14}>O:</FieldLabel>
        <Field $w={68}>
          <FieldValue>100</FieldValue>
          <Stepper $w={17}><Minus /></Stepper>
          <Stepper $w={17}><Plus c="#666" /></Stepper>
        </Field>
        <StatusSep />
        <CmdSlot>
          <Ic s={18} vb="0 0 18 18">
            <path d="M2 9C5 4.500 13 4.500 16 9 13 13.500 5 13.500 2 9Z" fill="none" stroke={W} strokeWidth="1.800" /><circle cx="9" cy="9" r="2.600" fill={W} />
            <path d="M3 3.500l2 2.500M15 3.500l-2 2.500M9 2v2.500" stroke={W} strokeWidth="1.500" />
          </Ic>
        </CmdSlot>
        <CmdSlot><Unlock /></CmdSlot>
        <Dropdown $w={79}><LayerName>•Layer 1</LayerName> <Tri d="down" /></Dropdown>
        <Message><b>Group</b> of <b>7</b> objects in layer <b>Layer 1</b>. Click selection again to toggle scale/rotation handles.</Message>
        <Coords><span>X:</span><span>215.79</span><span>Y:</span><span>182.14</span></Coords>
        <FieldLabel $w={20} $ml={0}>Z:</FieldLabel>
        <Field $w={88}>
          <FieldValue $center>46%</FieldValue>
          <Stepper $w={22}><Minus /></Stepper>
          <Stepper $w={22}><Plus /></Stepper>
        </Field>
        <FieldLabel $w={20} $ml={10}>R:</FieldLabel>
        <Field $w={94}>
          <FieldValue $center>0.00°</FieldValue>
          <Stepper $w={21}><Minus /></Stepper>
          <Stepper $w={21}><Plus /></Stepper>
        </Field>
      </Status>
      <Taskbar>
        <Weather>
          <svg width="28" height="20" viewBox="0 0 28 20">
            <defs><linearGradient id="cl" x1="0" y1="0" x2="0" y2="1"><stop offset="0" stopColor="#e9f2fb" /><stop offset="1" stopColor="#8fb6e6" /></linearGradient></defs>
            <path d="M6 19a5 5 0 0 1-1-10 7 7 0 0 1 13-2 6 6 0 0 1 4 12Z" fill="url(#cl)" />
          </svg>
          <WeatherText><span>86°F</span><Dim>Cloudy</Dim></WeatherText>
        </Weather>
        <TaskIcon>
          <Ic>
            <defs><linearGradient id="wn" x1="0" y1="0" x2="0" y2="1"><stop offset="0" stopColor="#6fe0fb" /><stop offset="1" stopColor="#0f9bee" /></linearGradient></defs>
            <path d="M1 1h10.500v10.500H1ZM12.500 1H23v10.500H12.500ZM1 12.500h10.500V23H1ZM12.500 12.500H23V23H12.500Z" fill="url(#wn)" />
          </Ic>
        </TaskIcon>
        <TaskIcon><Ic><circle cx="14" cy="10" r="7.500" fill="none" stroke="#e8e8e8" strokeWidth="2.200" /><path d="M8.500 16 3 22" stroke="#e8e8e8" strokeWidth="2.600" strokeLinecap="round" /></Ic></TaskIcon>
        <TaskIcon><Ic><rect x="1" y="8" width="15" height="15" rx="2" fill="#6a6a6a" /><rect x="8" y="1" width="15" height="15" rx="2" fill="#f2f2f2" /><rect x="8" y="8" width="8" height="8" fill="#b0b0b0" /></Ic></TaskIcon>
        <TaskIcon><Ic><path d="M12 1a11 11 0 1 1-5 20.800L3 23l.8-4.500A11 11 0 0 1 12 1Z" fill="#6f63d8" /><rect x="6.500" y="7.500" width="8" height="9" rx="1.500" fill="#fff" /><polygon points="15.500,11 19,8.500 19,15.500 15.500,13" fill="#fff" /></Ic></TaskIcon>
        <TaskIcon>
          <Ic><path d="M0 2h8l2 2h14v19H0Z" fill="#f5c23e" /><path d="M0 7h24v16H0Z" fill="#fde17a" /><rect x="7" y="16" width="12" height="7" rx="1" fill="#2a8fd8" /></Ic>
          <TaskDot />
        </TaskIcon>
        <TaskIcon>
          <Ic>
            <defs><linearGradient id="ed" x1="0" y1="0" x2="1" y2="1"><stop offset="0" stopColor="#35c3e8" /><stop offset="1" stopColor="#4fdc8a" /></linearGradient></defs>
            <circle cx="12" cy="12" r="12" fill="url(#ed)" />
            <path d="M1 14C1 6 9 4 15 8c3 2 3 6 1 7-3 1-7 1-6-3-3 2-3 8 3 10C7 24 1 20 1 14Z" fill="#0f5fb0" />
            <path d="M24 14c-1 5-5 10-11 10 3 0 8-2 9-6Z" fill="#155ea8" />
          </Ic>
        </TaskIcon>
        <TaskIcon><ChromeIc /></TaskIcon>
        <TaskIcon>
          <Ic>
            <rect x="9" y="2" width="13" height="20" fill="#f4f6fa" /><path d="M14 6h6M14 10h6M14 14h6M14 18h6" stroke="#2a5caa" strokeWidth="1.300" />
            <polygon points="1,3 14,0 14,24 1,21" fill="#2a5699" />
            <text x="7.500" y="16" textAnchor="middle" fontSize="11" fontWeight="700" fontFamily="Liberation Sans, sans-serif" fill="#fff">W</text>
          </Ic>
        </TaskIcon>
        <TaskIcon><ChromeIc /><TaskDot /></TaskIcon>
        <TaskIcon $active>
          <InkLogo s={24} />
          <TaskUnderline />
        </TaskIcon>
        <Tray>
          <TraySlot $w={26}><svg width="12" height="7" fill="none" stroke="#eee" strokeWidth="1.100"><path d="M.5 6.500 6 1l5.500 5.500" /></svg></TraySlot>
          <TraySlot $w={28}>
            <svg width="16" height="13" viewBox="0 0 16 13" fill="none" stroke="#eee" strokeWidth="1.300"><path d="M.7 4.500a10.500 10.500 0 0 1 14.600 0M3 7a7 7 0 0 1 10 0M5.300 9.500a3.500 3.500 0 0 1 5.400 0" /><circle cx="8" cy="11.500" r=".9" fill="#eee" /></svg>
          </TraySlot>
          <TraySlot $w={20}>
            <svg width="17" height="14" viewBox="0 0 17 14" fill="none" stroke="#eee" strokeWidth="1.100"><path d="M1 4.500h2.500L7.500 1v12L3.500 9.500H1Z" /><path d="M10 4.500a3.500 3.500 0 0 1 0 5" /><path d="M12 3a6 6 0 0 1 0 8M14 1.500a8.500 8.500 0 0 1 0 11" stroke="#777" /></svg>
          </TraySlot>
          <TraySlot $w={30}>
            <svg width="17" height="11" viewBox="0 0 17 11" fill="none" stroke="#eee"><rect x=".5" y=".5" width="14" height="10" rx="2" /><rect x="2" y="2" width="3.500" height="7" fill="#eee" stroke="none" /><rect x="15" y="3.500" width="1.500" height="4" fill="#eee" stroke="none" /></svg>
          </TraySlot>
          <Clock>10:38 AM<br />9/13/2022</Clock>
        </Tray>
      </Taskbar>
      <Menu>
        {menu.map((r) => (
          <React.Fragment key={r.t}>
            <MenuRow $off={r.off} $on={r.on}>
              <span>{r.t}</span>
              {r.k && <Shortcut>{r.k}</Shortcut>}
              {r.more && <Tri d="right" />}
            </MenuRow>
            {r.sep && <MenuSep />}
          </React.Fragment>
        ))}
      </Menu>
    </Root>
  );
}
